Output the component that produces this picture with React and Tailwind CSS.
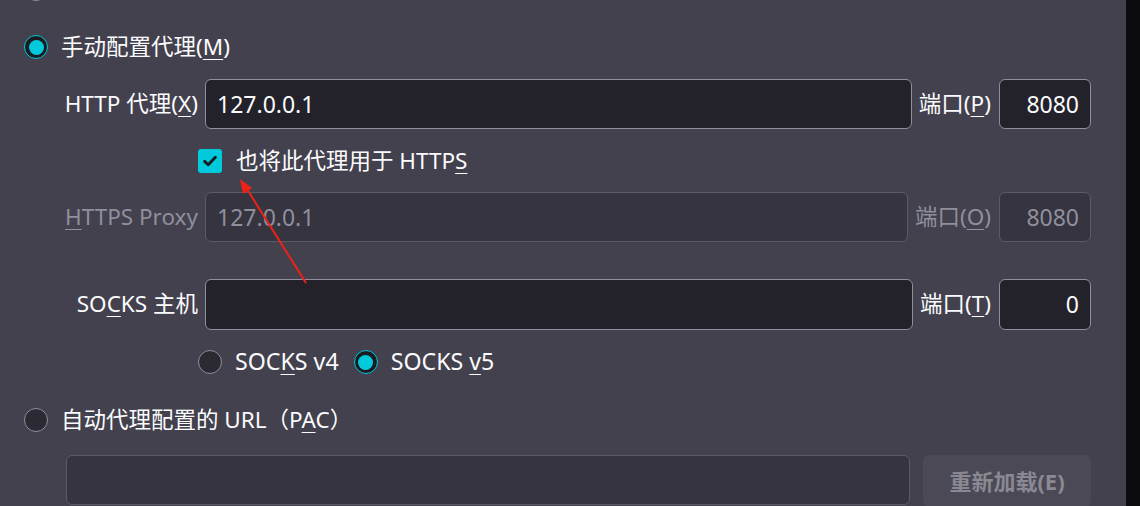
import React from "react";

const font = { fontFamily: '"Noto Sans", "Noto Sans CJK SC", sans-serif' };

function Radio({ checked }) {
  if (checked) {
    return (
      <div className="w-[24px] h-[24px] shrink-0 rounded-full border border-[#00cadb] bg-[#1c1b22] flex items-center justify-center">
        <div className="w-[15px] h-[15px] rounded-full bg-[#00cadb]" />
      </div>
    );
  }
  return <div className="w-[24px] h-[24px] shrink-0 rounded-full border border-[#8f8f9d] bg-[#2b2a33]" />;
}

function Checkbox() {
  return (
    <div className="w-[24px] h-[24px] shrink-0 rounded-[3px] bg-[#00cadb] flex items-center justify-center">
      <svg width="16" height="16" viewBox="0 0 16 16">
        <path d="M2.6 8.4 L6.2 11.8 L13.4 4.2" fill="none" stroke="#1c1b22" strokeWidth="2.9" strokeLinecap="round" strokeLinejoin="round" />
      </svg>
    </div>
  );
}

function U({ children }) {
  return <span className="underline underline-offset-[4px] decoration-[1px]">{children}</span>;
}

function Input({ value, disabled, right, className = "", h = "h-[50px]" }) {
  return (
    <div
      className={`${h} rounded-[6px] border flex items-center px-[11px] text-[23px] ${
        disabled ? "border-[#5b5a66] bg-[#35343f] text-[#8f8f9d]" : "border-[#8f8f9d] bg-[#23222b] text-[#fbfbfe]"
      } ${right ? "justify-end" : ""} ${className}`}
    >
      {value}
    </div>
  );
}

function ProxyRow({ label, value, portLabel, port, disabled, mt, h }) {
  return (
    <div className={`flex items-center ${mt} ${h}`}>
      <div className={`w-[174px] shrink-0 text-right whitespace-nowrap ${disabled ? "text-[#8f8f9d]" : "text-[#fbfbfe]"}`}>
        {label}
      </div>
      <Input value={value} disabled={disabled} className="ml-[7px] flex-1" h={h} />
      <div className={`ml-[7px] whitespace-nowrap ${disabled ? "text-[#8f8f9d]" : "text-[#fbfbfe]"}`}>{portLabel}</div>
      <Input value={port} disabled={disabled} right className="ml-[8px] w-[92px] shrink-0" h={h} />
    </div>
  );
}

export default function App() {
  return (
    <div className="w-[1140px] h-[506px] bg-[#42414d] flex overflow-hidden relative text-[22.5px] leading-none" style={font}>
      <div className="w-[1126px] shrink-0 pl-[24px] pr-[35px] flex flex-col text-[#fbfbfe]">
        <div className="flex items-center mt-[-23px] h-[24px] shrink-0">
          <Radio />
          <span className="ml-[13px] whitespace-nowrap">使用系统代理设置(U)</span>
        </div>
        <div className="flex items-center mt-[34px] h-[24px] shrink-0">
          <Radio checked />
          <span className="ml-[13px] whitespace-nowrap">手动配置代理(<U>M</U>)</span>
        </div>
        <ProxyRow
          mt="mt-[20px]"
          h="h-[50px]"
          label={<>HTTP 代理(<U>X</U>)</>}
          value="127.0.0.1"
          portLabel={<>端口(<U>P</U>)</>}
          port="8080"
        />
        <div className="flex items-center mt-[20px] h-[24px] ml-[174px] shrink-0">
          <Checkbox />
          <span className="ml-[14px] whitespace-nowrap">也将此代理用于 HTTP<U>S</U></span>
        </div>
        <ProxyRow
          mt="mt-[19px]"
          h="h-[50px]"
          disabled
          label={<><U>H</U>TTPS Proxy</>}
          value="127.0.0.1"
          portLabel={<>端口(<U>O</U>)</>}
          port="8080"
        />
        <ProxyRow
          mt="mt-[37px]"
          h="h-[51px]"
          label={<>SO<U>C</U>KS 主机</>}
          value=""
          portLabel={<>端口(<U>T</U>)</>}
          port="0"
        />
        <div className="flex items-center mt-[20px] h-[24px] ml-[174px] shrink-0">
          <Radio />
          <span className="ml-[13px] whitespace-nowrap text-[23.2px]">SOC<U>K</U>S v4</span>
          <div className="ml-[15px]">
            <Radio checked />
          </div>
          <span className="ml-[13px] whitespace-nowrap text-[23.2px]">SOCKS <U>v</U>5</span>
        </div>
        <div className="flex items-center mt-[34px] h-[24px] shrink-0">
          <Radio />
          <span className="ml-[13px] whitespace-nowrap">自动代理配置的 URL（P<U>A</U>C）</span>
        </div>
        <div className="flex items-start mt-[23px] ml-[42px] shrink-0">
          <Input value="" disabled className="flex-1" h="h-[50px]" />
          <div className="ml-[13px] w-[168px] h-[52px] shrink-0 rounded-[6px] bg-[#4a4955] flex items-center justify-center font-bold text-[22px] text-[#8a8993]">
            重新加载(E)
          </div>
        </div>
      </div>
      <div className="flex-1 bg-[#0c0c0e]" />
      <svg className="absolute left-0 top-0 pointer-events-none" width="1140" height="506">
        <line x1="306" y1="283" x2="245" y2="186" stroke="#ee2218" strokeWidth="2" />
        <polygon points="240,179 252,188 243,194" fill="#ee2218" />
      </svg>
    </div>
  );
}
